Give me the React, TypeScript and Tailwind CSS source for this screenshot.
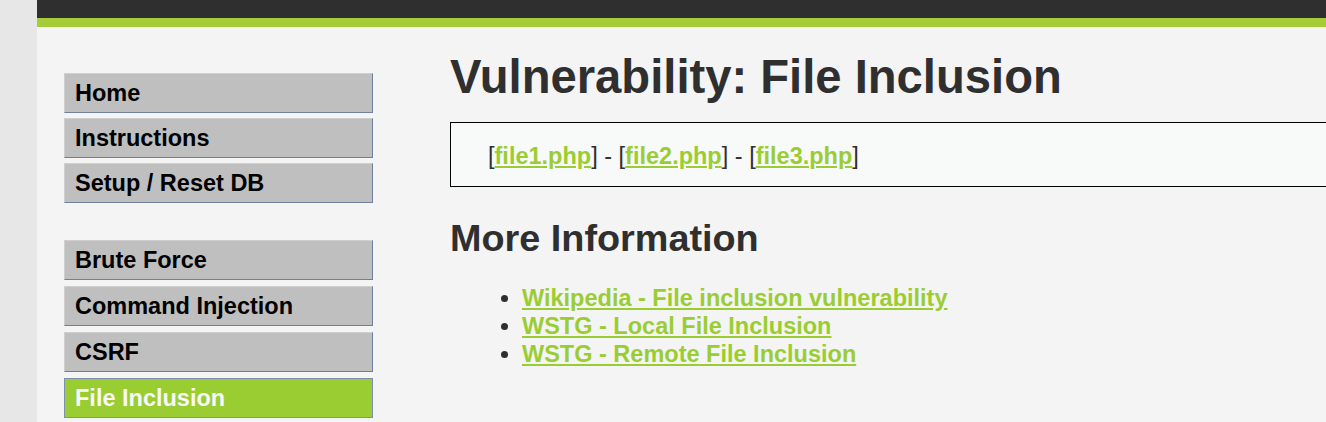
const topMenu = ["Home", "Instructions", "Setup / Reset DB"];
const vulnMenu = ["Brute Force", "Command Injection", "CSRF", "File Inclusion"];

const files = ["file1.php", "file2.php", "file3.php"];

const moreInfo = [
  "Wikipedia - File inclusion vulnerability",
  "WSTG - Local File Inclusion",
  "WSTG - Remote File Inclusion",
];

function MenuItem({ label, selected }: { label: string; selected?: boolean }) {
  return (
    <li>
      <a
        href="#"
        className={
          selected
            ? "flex h-[40px] items-center border border-[#7f8fb0] bg-[#9acd32] pl-[10px] font-bold text-[#f8f8f8]"
            : "flex h-[40px] items-center border border-t-[#cfcfcf] border-l-[#cfcfcf] border-r-[#6f7f9c] border-b-[#6f7f9c] bg-[#bfbfbf] pl-[10px] font-bold text-black"
        }
      >
        {label}
      </a>
    </li>
  );
}

export default function App() {
  return (
    <div
      className="flex h-[422px] overflow-hidden bg-[#e7e7e7] text-[23.5px] text-[#2f2f2f]"
      style={{ fontFamily: '"Liberation Sans", Arial, sans-serif' }}
    >
      <div className="w-[37px] shrink-0" />
      <div className="flex-1 bg-[#f4f4f4]">
        <div className="h-[18px] bg-[#2f2f2f]" />
        <div className="h-[9px] bg-[#a6cd37]" />

        <div className="flex">
          {/* sidebar */}
          <div className="w-[413px] shrink-0 pl-[27px] pt-[46px]">
            <ul className="flex w-[309px] flex-col gap-[5px] leading-[38px]">
              {topMenu.map((m) => (
                <MenuItem key={m} label={m} />
              ))}
            </ul>
            <ul className="mt-[37px] flex w-[309px] flex-col gap-[6px] leading-[38px]">
              {vulnMenu.map((m) => (
                <MenuItem key={m} label={m} selected={m === "File Inclusion"} />
              ))}
            </ul>
          </div>

          {/* body */}
          <div className="pt-[26px]">
            <h1 className="text-[47.2px] font-bold leading-[47px] whitespace-nowrap">
              Vulnerability: File Inclusion
            </h1>

            <div className="mt-[22px] h-[65px] w-[920px] border border-black bg-[#f8f9f9] pl-[37px] pt-[19px] leading-[28px] whitespace-nowrap">
              {files.map((f, i) => (
                <span key={f}>
                  {i > 0 ? " - " : ""}[
                  <a href="#" className="font-bold text-[#9acd32] underline">
                    {f}
                  </a>
                  ]
                </span>
              ))}
            </div>

            <h2 className="mt-[29px] text-[37.8px] font-bold leading-[45px]">More Information</h2>

            <ul className="mt-[23px] list-disc pl-[72px] leading-[28px]">
              {moreInfo.map((t) => (
                <li key={t}>
                  <a href="#" className="font-bold text-[#9acd32] underline">
                    {t}
                  </a>
                </li>
              ))}
            </ul>
          </div>
        </div>
      </div>
    </div>
  );
}
